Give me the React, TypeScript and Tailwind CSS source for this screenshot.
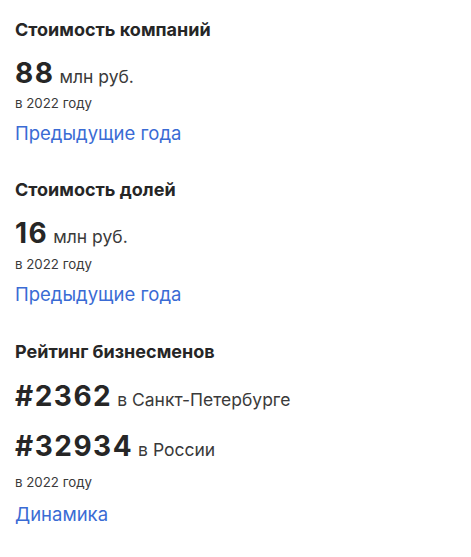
export default function App() {
  const title = "text-[18px] leading-[24px] font-bold text-[#262626]";
  const num = "text-[28px] leading-[32px] font-bold text-[#262626] tracking-[1.5px]";
  const unit = "text-[17.5px] text-[#3a3a3a] ml-[5px]";
  const small = "text-[13.3px] leading-[18px] text-[#3a3a3a]";
  const link = "text-[18.5px] leading-[24px] text-[#3a6bd4]";
  return (
    <div className="w-[471px] h-[557px] bg-white pl-[15px] pt-[18px] flex flex-col" style={{ fontFamily: "Inter, sans-serif" }}>
      <div className="flex flex-col">
        <div className={title}>Стоимость компаний</div>
        <div className="flex items-baseline mt-[15px]">
          <span className={num}>88</span>
          <span className={unit}>млн руб.</span>
        </div>
        <div className={`${small} mt-[4px]`}>в 2022 году</div>
        <div className={`${link} mt-[9px]`}>Предыдущие года</div>
      </div>
      <div className="flex flex-col mt-[33px]">
        <div className={title}>Стоимость долей</div>
        <div className="flex items-baseline mt-[15px]">
          <span className={num}>16</span>
          <span className={unit}>млн руб.</span>
        </div>
        <div className={`${small} mt-[4px]`}>в 2022 году</div>
        <div className={`${link} mt-[9px]`}>Предыдущие года</div>
      </div>
      <div className="flex flex-col mt-[34px]">
        <div className={title}>Рейтинг бизнесменов</div>
        <div className="flex items-baseline mt-[16px]">
          <span className={num}>#2362</span>
          <span className={unit}>в Санкт-Петербурге</span>
        </div>
        <div className="flex items-baseline mt-[17px]">
          <span className={num}>#32934</span>
          <span className={unit}>в России</span>
        </div>
        <div className={`${small} mt-[10px]`}>в 2022 году</div>
        <div className={`${link} mt-[11px]`}>Динамика</div>
      </div>
    </div>
  );
}
